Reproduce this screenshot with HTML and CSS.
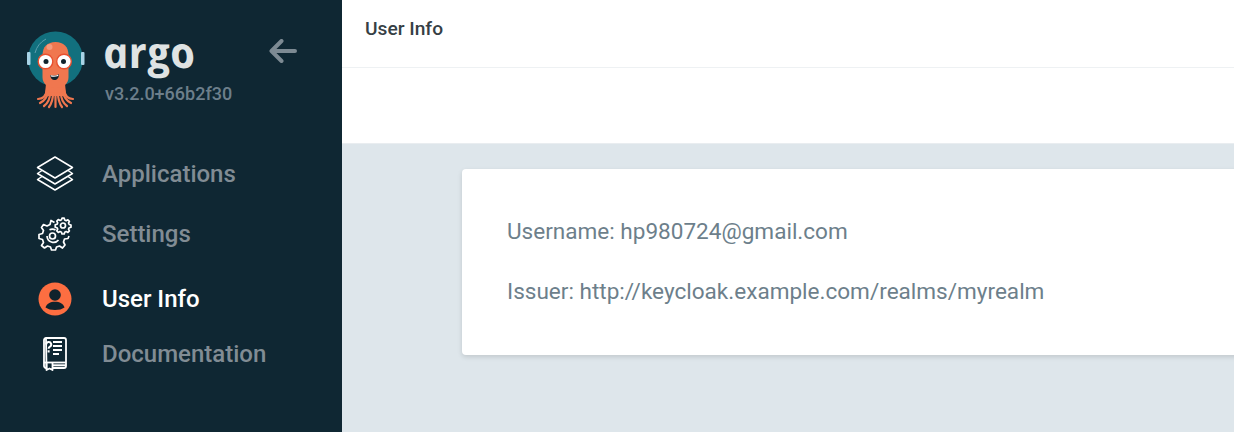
FILE: index.html
```html
<!DOCTYPE html>
<html lang="en">
<head>
<meta charset="utf-8">
<title>User Info</title>
<link rel="stylesheet" href="styles.css">
</head>
<body>
<div class="app">
  <aside class="sidebar">
    <div class="brand">
      <svg class="octopus" width="60" height="80" viewBox="26 30 60 80" aria-hidden="true">
        <circle cx="55.500" cy="59" r="27.500" fill="#12707e"/>
        <path d="M35 53a22 22 0 0 1 11-14" fill="none" stroke="#5f9fae" stroke-width="1"/>
        <rect x="27" y="52" width="3.500" height="13" rx="1" fill="#a8d3e6"/>
        <rect x="81" y="52" width="3.500" height="13" rx="1" fill="#a8d3e6"/>
        <rect x="26" y="84" width="60" height="26" fill="#0f2733"/>
        <path d="M46 84h19l1 9-1 3h-19l-1-3z" fill="#f0774f"/>
        <g fill="none" stroke="#f0774f" stroke-width="2.200" stroke-linecap="round">
          <path d="M47 90c-1 6-4 9-9 9"/>
          <path d="M48 92c-1 6-4 9-8 11"/>
          <path d="M50 93c0 6-2 10-6 13"/>
          <path d="M53 93c0 6-1 10-4 14"/>
          <path d="M55.500 93c0 6 0 10 0 14"/>
          <path d="M58 93c0 6 1 10 4 14"/>
          <path d="M61 93c0 6 2 10 6 13"/>
          <path d="M63 92c1 6 4 9 8 11"/>
          <path d="M64 90c1 6 4 9 9 9"/>
        </g>
        <path d="M42.500 55c0-8 5-13 13-13s13 5 13 13v22c0 6-4 11-13 11s-13-5-13-11z" fill="#f0774f"/>
        <circle cx="49.500" cy="47" r="3" fill="#f79a7c"/>
        <circle cx="45.500" cy="61.500" r="7.300" fill="#fff" stroke="#e8502f" stroke-width="1.400"/>
        <circle cx="64" cy="61.500" r="7.300" fill="#fff" stroke="#e8502f" stroke-width="1.400"/>
        <circle cx="46" cy="61.500" r="2.500" fill="#10222c"/>
        <circle cx="63.500" cy="61.500" r="2.500" fill="#10222c"/>
        <path d="M50 75c3 1 6 1 9-1c0 4-2 6-4.500 6s-4-2-4.500-5z" fill="#10222c"/>
        <path d="M50.500 75.300c3 .8 5.500.6 8-.8l-.3 1.600c-2.500 .8-5 .8-7.300 .4z" fill="#fff"/>
      </svg>
      <div class="brand-text">
        <div class="wordmark">argo</div>
        <div class="version">v3.2.0+66b2f30</div>
      </div>
      <svg class="collapse" width="28" height="24" viewBox="0 0 28 24" aria-hidden="true">
        <path d="M26 12H3M12.500 2 2.500 12l10 10" fill="none" stroke="#7d8a93" stroke-width="4" stroke-linecap="round" stroke-linejoin="round"/>
      </svg>
    </div>
    <nav class="nav">
      <a class="item item-apps">
        <span class="icon">
          <svg width="38" height="36" viewBox="0 0 38 36" fill="none" stroke="#fff" stroke-width="1.500" stroke-linejoin="round" aria-hidden="true">
            <path d="M19 1 36.500 11.500 19 22 1.500 11.500z"/>
            <path d="M6 14.500 1.500 17.500 19 28 36.500 17.500 32 14.500"/>
            <path d="M6 20.500 1.500 23.500 19 34 36.500 23.500 32 20.500"/>
          </svg>
        </span>
        <span class="label">Applications</span>
      </a>
      <a class="item item-settings">
        <span class="icon">
          <svg width="34" height="34" viewBox="0 0 34 34" fill="none" stroke="#fff" stroke-width="1.700" stroke-linejoin="round" aria-hidden="true">
            <path d="M16.500 5.500 13 3.500 12 7.500 9 9 5.500 7.500 3.500 10.500 5.500 13.500 4.500 16.500 1 17.500 1 21.500 4.500 22.500 5.500 25.500 3.500 28.500 6.500 31 9.500 29 12.500 30 13.500 33 17.500 33 18.500 30 21.500 29 24.500 31 27 28 25.500 25 26.500 22 30 21.500 31 19"/>
            <path d="M9 19a6.500 6.500 0 0 0 11.500 4M17.500 13a6.500 6.500 0 0 0-6-.3"/>
            <circle cx="14.500" cy="19" r="3"/>
            <circle cx="25" cy="8.500" r="2.500"/>
            <path d="M24 1.200h2.200l.5 1.800 1.500.7 1.700-.9 1.500 1.500-.9 1.700.7 1.500 1.800.5v2.200l-1.800.5-.7 1.500.9 1.700-1.500 1.500-1.700-.9-1.500.7-.5 1.800H24l-.5-1.800-1.500-.7-1.700.9-1.500-1.500.9-1.700-.7-1.500-1.800-.5V7.800l1.800-.5.7-1.500-.9-1.700 1.500-1.500 1.700.9 1.500-.7z"/>
          </svg>
        </span>
        <span class="label">Settings</span>
      </a>
      <a class="item item-user active">
        <span class="icon">
          <svg width="34" height="34" viewBox="0 0 34 34" aria-hidden="true">
            <circle cx="17" cy="17" r="16.500" fill="#fd6e41"/>
            <circle cx="17" cy="13" r="5.800" fill="#10222c"/>
            <path d="M7.500 25.500c1-4 5-5.800 9.500-5.800s8.500 1.800 9.500 5.800c-2.500 1.700-5.500 2.500-9.500 2.500s-7-.8-9.500-2.500z" fill="#10222c"/>
          </svg>
        </span>
        <span class="label">User Info</span>
      </a>
      <a class="item item-docs">
        <span class="icon">
          <svg width="24" height="34" viewBox="0 0 24 34" fill="none" stroke="#fff" stroke-width="1.800" stroke-linejoin="round" aria-hidden="true">
            <path d="M3 1h18a2 2 0 0 1 2 2v26a2 2 0 0 1-2 2H10M3.500 31H3a2 2 0 0 1-2-2V3a2 2 0 0 1 2-2z"/>
            <path d="M1 25.500h22"/>
            <path d="M10 28.300h13" stroke-width="2"/>
            <path d="M3.500 26v7l3-1.500 3 1.500v-7"/>
            <path stroke-width="2" d="M3.200 7.500a2.500 2.500 0 1 1 3.700 2.200c-1 .5-1.300 1-1.300 2.100M5.600 13.200v2.200"/>
            <path d="M10 5h9M10 9h9M10 13h9M10 17h6"/>
          </svg>
        </span>
        <span class="label">Documentation</span>
      </a>
    </nav>
  </aside>
  <main class="main">
    <header class="topbar">
      <h1 class="title">User Info</h1>
    </header>
    <div class="toolbar"></div>
    <section class="content">
      <div class="card">
        <p class="row">Username: hp980724@gmail.com</p>
        <p class="row">Issuer: http://keycloak.example.com/realms/myrealm</p>
      </div>
    </section>
  </main>
</div>
</body>
</html>
```
FILE: styles.css
```css
* { box-sizing: border-box; }
html, body { margin: 0; height: 100%; overflow: hidden; }
body { font-family: Roboto, "Liberation Sans", sans-serif; background: #dee6eb; }

.app { display: flex; height: 432px; }

.sidebar {
  width: 342px;
  flex: none;
  background: #0f2733;
  display: flex;
  flex-direction: column;
}

.brand {
  display: flex;
  align-items: flex-start;
  height: 144px;
  padding: 30px 0 0 26px;
}
.octopus { flex: none; }
.brand-text { margin-left: 19px; width: 168px; flex: none; }
.wordmark {
  font-family: "Open Sans", sans-serif;
  font-style: italic;
  font-weight: 700;
  font-size: 43px;
  line-height: 46px;
  color: #dfe3e3;
  transform: skewX(12deg);
  transform-origin: 0 100%;
  margin: -1px 0 0 2px;
}
.version {
  font-size: 18px;
  line-height: 22px;
  font-weight: 500;
  color: #6d7f8b;
  margin-top: 8px;
}
.collapse { flex: none; margin: 9px 0 0 -4px; }

.nav { display: flex; flex-direction: column; }
.item { display: flex; align-items: center; height: 60px; padding-left: 36px; }
.item-user { margin-top: 5px; }
.item-docs { margin-top: -5px; }
.icon { width: 66px; display: flex; flex: none; justify-content: flex-start; }
.item-settings .icon, .item-user .icon { padding-left: 2px; }
.item-docs .icon { padding-left: 7px; }
.label { font-size: 24px; font-weight: 500; color: #818c94; }
.active .label { color: #fff; }

.main { flex: 1; min-width: 0; display: flex; flex-direction: column; }
.topbar {
  height: 68px;
  background: #fff;
  border-bottom: 1px solid #eef1f3;
  display: flex;
  align-items: center;
  padding: 0 0 10px 23px;
}
.title { margin: 0; font-size: 19.200px; font-weight: 500; color: #363f45; }
.toolbar { height: 76px; background: #fff; border-bottom: 1px solid #e9edf0; }
.content { flex: 1; padding: 25px 0 0 120px; overflow: hidden; }
.card {
  width: 900px;
  height: 186px;
  background: #fff;
  border-radius: 4px;
  box-shadow: 0 2px 5px rgba(0, 0, 0, 0.13);
  padding: 48px 45px 0;
}
.row { margin: 0 0 30px; font-size: 22.550px; line-height: 30px; color: #6d7f8b; }
```
